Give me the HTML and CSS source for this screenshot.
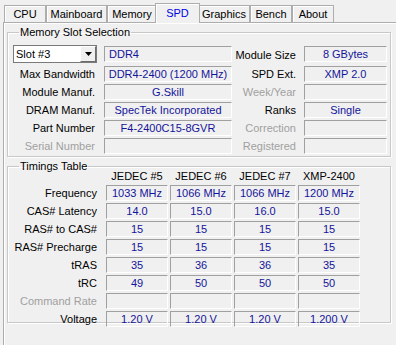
FILE: index.html
```html
<!DOCTYPE html>
<html>
<head>
<meta charset="utf-8">
<link rel="stylesheet" href="styles.css">
</head>
<body>
<div class="tabs">
  <div class="tab w-cpu">CPU</div>
  <div class="tab w-mb">Mainboard</div>
  <div class="tab w-mem">Memory</div>
  <div class="tab sel w-spd">SPD</div>
  <div class="tab w-gfx">Graphics</div>
  <div class="tab w-bench">Bench</div>
  <div class="tab w-about">About</div>
</div>
<div class="panel">
  <fieldset class="group slot">
    <legend>Memory Slot Selection</legend>
    <div class="slotgrid">
      <div class="combo"><span class="combo-text">Slot #3</span><span class="combo-btn"><svg width="7" height="4" viewBox="0 0 7 4"><path d="M0 0H7L3.5 4Z" fill="#000"/></svg></span></div>
      <div class="field left first">DDR4</div>
      <div class="lbl r first">Module Size</div>
      <div class="field first">8 GBytes</div>

      <div class="lbl">Max Bandwidth</div>
      <div class="field">DDR4-2400 (1200 MHz)</div>
      <div class="lbl r">SPD Ext.</div>
      <div class="field">XMP 2.0</div>

      <div class="lbl">Module Manuf.</div>
      <div class="field">G.Skill</div>
      <div class="lbl r dis">Week/Year</div>
      <div class="field"></div>

      <div class="lbl">DRAM Manuf.</div>
      <div class="field">SpecTek Incorporated</div>
      <div class="lbl r">Ranks</div>
      <div class="field">Single</div>

      <div class="lbl">Part Number</div>
      <div class="field">F4-2400C15-8GVR</div>
      <div class="lbl r dis">Correction</div>
      <div class="field"></div>

      <div class="lbl dis">Serial Number</div>
      <div class="field"></div>
      <div class="lbl r dis">Registered</div>
      <div class="field"></div>
    </div>
  </fieldset>

  <fieldset class="group timings">
    <legend>Timings Table</legend>
    <div class="tgrid">
      <div class="hdr-blank"></div>
      <div class="hdr">JEDEC #5</div>
      <div class="hdr">JEDEC #6</div>
      <div class="hdr">JEDEC #7</div>
      <div class="hdr">XMP-2400</div>

      <div class="lbl">Frequency</div>
      <div class="field">1033 MHz</div><div class="field">1066 MHz</div><div class="field">1066 MHz</div><div class="field">1200 MHz</div>

      <div class="lbl">CAS# Latency</div>
      <div class="field">14.0</div><div class="field">15.0</div><div class="field">16.0</div><div class="field">15.0</div>

      <div class="lbl">RAS# to CAS#</div>
      <div class="field">15</div><div class="field">15</div><div class="field">15</div><div class="field">15</div>

      <div class="lbl">RAS# Precharge</div>
      <div class="field">15</div><div class="field">15</div><div class="field">15</div><div class="field">15</div>

      <div class="lbl">tRAS</div>
      <div class="field">35</div><div class="field">36</div><div class="field">36</div><div class="field">35</div>

      <div class="lbl">tRC</div>
      <div class="field">49</div><div class="field">50</div><div class="field">50</div><div class="field">50</div>

      <div class="lbl dis">Command Rate</div>
      <div class="field"></div><div class="field"></div><div class="field"></div><div class="field"></div>

      <div class="lbl">Voltage</div>
      <div class="field">1.20 V</div><div class="field">1.20 V</div><div class="field">1.20 V</div><div class="field">1.200 V</div>
    </div>
  </fieldset>
</div>
</body>
</html>
```
FILE: styles.css
```css
* { box-sizing: border-box; }
html, body { margin: 0; padding: 0; }
body {
  width: 396px;
  height: 345px;
  overflow: hidden;
  background: #f0f0f0;
  font-family: "Liberation Sans", Arial, sans-serif;
  font-size: 11px;
  color: #000;
}
.tabs {
  display: flex;
  align-items: flex-end;
  height: 22px;
  padding-left: 4px;
}
.tab {
  height: 17px;
  border: 1px solid #adadad;
  border-bottom: none;
  background: #f0f0f0;
  text-align: center;
  line-height: 16px;
  color: #000;
  box-shadow: inset 1px 1px 0 #fff;
}
.tab.sel {
  position: relative;
  z-index: 2;
  height: 20px;
  margin: 0 -2px -1px -2px;
  line-height: 18px;
  color: #0000e6;
  background: #f0f0f0;
}
.w-cpu { width: 42px; }
.w-mb { width: 61px; }
.w-mem { width: 50px; }
.w-spd { width: 45px; }
.w-gfx { width: 52px; }
.w-bench { width: 42px; }
.w-about { width: 42px; }

.panel {
  margin-left: 3px;
  width: 394px;
  height: 330px;
  border: 1px solid #adadad;
  box-shadow: inset 1px 1px 0 #fff;
  padding: 3px 0 0 3px;
}
.group {
  margin: 0;
  width: 384px;
  border: 1px solid #c8c8c8;
  box-shadow: 1px 1px 0 #fff, inset 1px 1px 0 #fff;
  padding: 0 0 0 5px;
}
.group legend {
  margin-left: 6px;
  padding: 0 1px;
  line-height: 13px;
  color: #000;
}
.slot {
  height: 131px;
  padding-top: 6px;
}
.timings {
  margin-top: 3px;
  height: 163px;
  padding-top: 0;
}
.slotgrid {
  display: grid;
  grid-template-columns: 91px 128px 72px 83px;
  grid-template-rows: 19px repeat(5, 16px);
  row-gap: 2px;
  align-items: start;
}
.lbl {
  height: 16px;
  line-height: 16px;
  text-align: right;
  padding-right: 9px;
  white-space: nowrap;
}
.lbl.r { padding-right: 8px; }
.lbl.first { height: 19px; line-height: 20px; }
.dis { color: #a0a0a0; }
.field {
  height: 16px;
  line-height: 14px;
  border: 1px solid;
  border-color: #a0a0a0 #fff #fff #a0a0a0;
  color: #14149a;
  text-align: center;
  white-space: nowrap;
  overflow: hidden;
}
.field.first { margin-top: 1px; }
.field.left { text-align: left; padding-left: 4px; }
.combo {
  width: 84px;
  height: 18px;
  display: flex;
  border: 1px solid #7a7a7a;
  background: #fff;
}
.combo-text {
  flex: 1;
  padding-left: 2px;
  line-height: 16px;
}
.combo-btn {
  width: 16px;
  height: 16px;
  background: #f0f0f0;
  border: 1px solid;
  border-color: #fff #6d6d6d #6d6d6d #fff;
  display: flex;
  align-items: center;
  justify-content: center;
}
.tgrid {
  display: grid;
  grid-template-columns: 91px 62px 62px 62px 62px;
  grid-template-rows: 13px repeat(8, 16px);
  column-gap: 2px;
  row-gap: 2px;
  margin-top: -3px;
}
.tgrid .lbl { padding-right: 7px; }
.hdr {
  text-align: center;
  line-height: 13px;
  white-space: nowrap;
}
```
